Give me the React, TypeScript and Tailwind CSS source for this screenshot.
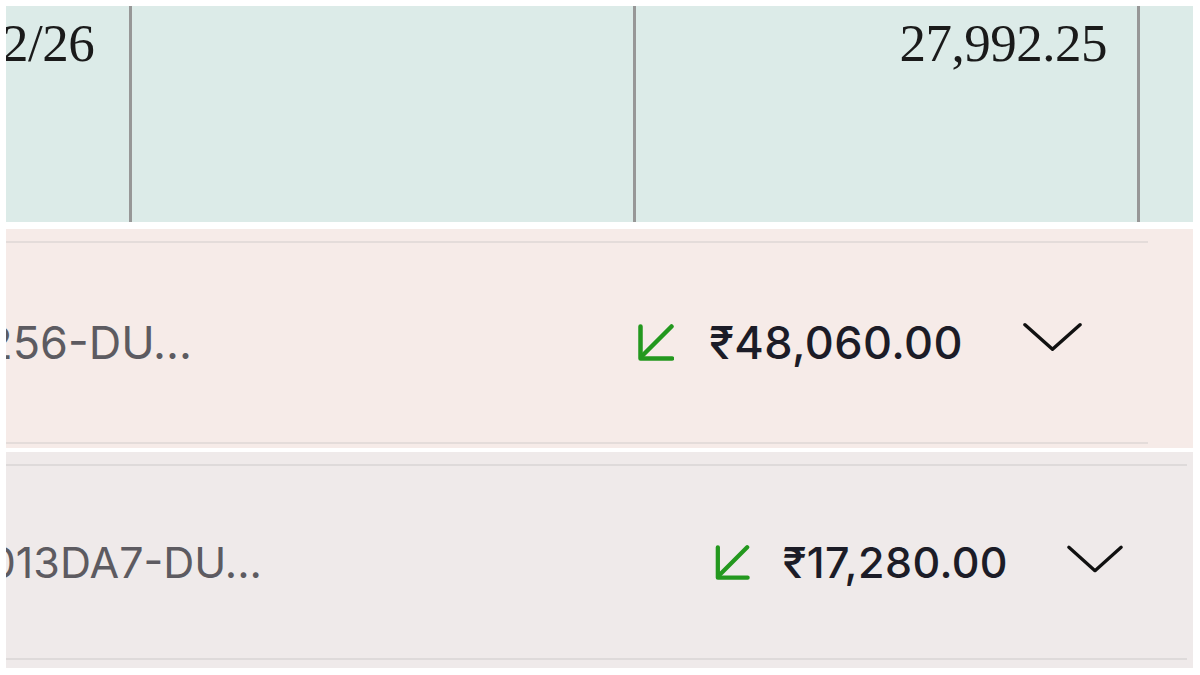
import React from 'react';

const sans = 'font-["Inter","Noto_Sans","DejaVu_Sans",sans-serif]';

function ArrowIn({ className }: { className?: string }) {
  // down-left "received" arrow
  return (
    <svg viewBox="0 0 36 37" className={className} fill="none" stroke="currentColor" strokeWidth={4.5} strokeLinecap="round" strokeLinejoin="round">
      <path d="M33.5 2.5 L4.5 31.5" />
      <path d="M2.5 2.5 V34.5 H34" />
    </svg>
  );
}

function Chevron({ className }: { className?: string }) {
  return (
    <svg viewBox="0 0 60 30" className={className} fill="none" stroke="currentColor" strokeWidth={3.5} strokeLinecap="round" strokeLinejoin="round">
      <path d="M2 2.5 L30 27.5 L58 2.5" />
    </svg>
  );
}

const tones = {
  rose: {
    panel: 'h-[219px] w-[1187px] bg-[#f6ebe8] pt-[12px]',
    row: 'flex h-[203px] w-[1142px] items-center border-y-2 border-[#e4dcda] pr-[66px]',
    idBox: 'w-[186px]',
    text: 'text-[45px]',
    arrow: 'mr-[35px] h-[37px] w-[36px]',
    chevron: 'ml-[60px] mb-[12px] h-[30px] w-[59px]',
  },
  stone: {
    panel: 'h-[216px] w-[1187px] bg-[#efeaea] pt-[12px]',
    row: 'flex h-[196px] w-[1181px] items-center border-y-2 border-[#dedada] pr-[64px]',
    idBox: 'w-[256px]',
    text: 'text-[43px]',
    arrow: 'mr-[33px] h-[35px] w-[35px]',
    chevron: 'ml-[59px] mb-[7px] h-[28px] w-[56px]',
  },
};

function PaymentRow({ reference, amount, tone }: { reference: string; amount: string; tone: keyof typeof tones }) {
  const t = tones[tone];
  return (
    <div className={t.panel}>
      <div className={t.row}>
        <div className={`${t.idBox} flex shrink-0 justify-end overflow-hidden whitespace-nowrap`}>
          <span className={`${sans} ${t.text} leading-none text-[#5d5b61]`}>{reference}</span>
        </div>
        <div className="flex-1" />
        <ArrowIn className={`${t.arrow} shrink-0 text-[#23981e]`} />
        <span className={`${sans} ${t.text} leading-none font-medium tracking-[0.4px] text-[#1c1c27]`}>{amount}</span>
        <Chevron className={`${t.chevron} shrink-0 text-[#111111]`} />
      </div>
    </div>
  );
}

function LedgerStrip() {
  const serif = 'font-["Liberation_Serif","Times_New_Roman",serif] text-[53px] leading-none tracking-[-0.5px] text-[#1a1a1a]';
  return (
    <div className="flex h-[216px] w-[1187px] overflow-hidden bg-[#dcebe8]">
      <div className="w-[123px] shrink-0 overflow-hidden pt-[11px]">
        <div className={`${serif} -ml-[4px]`}>2/26</div>
      </div>
      <div className="w-[3px] shrink-0 bg-[#979797]" />
      <div className="w-[501px] shrink-0" />
      <div className="w-[3px] shrink-0 bg-[#979797]" />
      <div className="flex w-[501px] shrink-0 justify-end pt-[11px] pr-[30px]">
        <div className={serif}>27,992.25</div>
      </div>
      <div className="w-[3px] shrink-0 bg-[#979797]" />
      <div className="flex-1" />
    </div>
  );
}

export default function App() {
  return (
    <div className="flex h-[675px] w-[1200px] flex-col overflow-hidden bg-white pl-[6px] pt-[6px]">
      <LedgerStrip />
      <div className="h-[7px]" />
      <PaymentRow tone="rose" reference="256-DU..." amount="₹48,060.00" />
      <div className="h-[4px]" />
      <PaymentRow tone="stone" reference="013DA7-DU..." amount="₹17,280.00" />
    </div>
  );
}
